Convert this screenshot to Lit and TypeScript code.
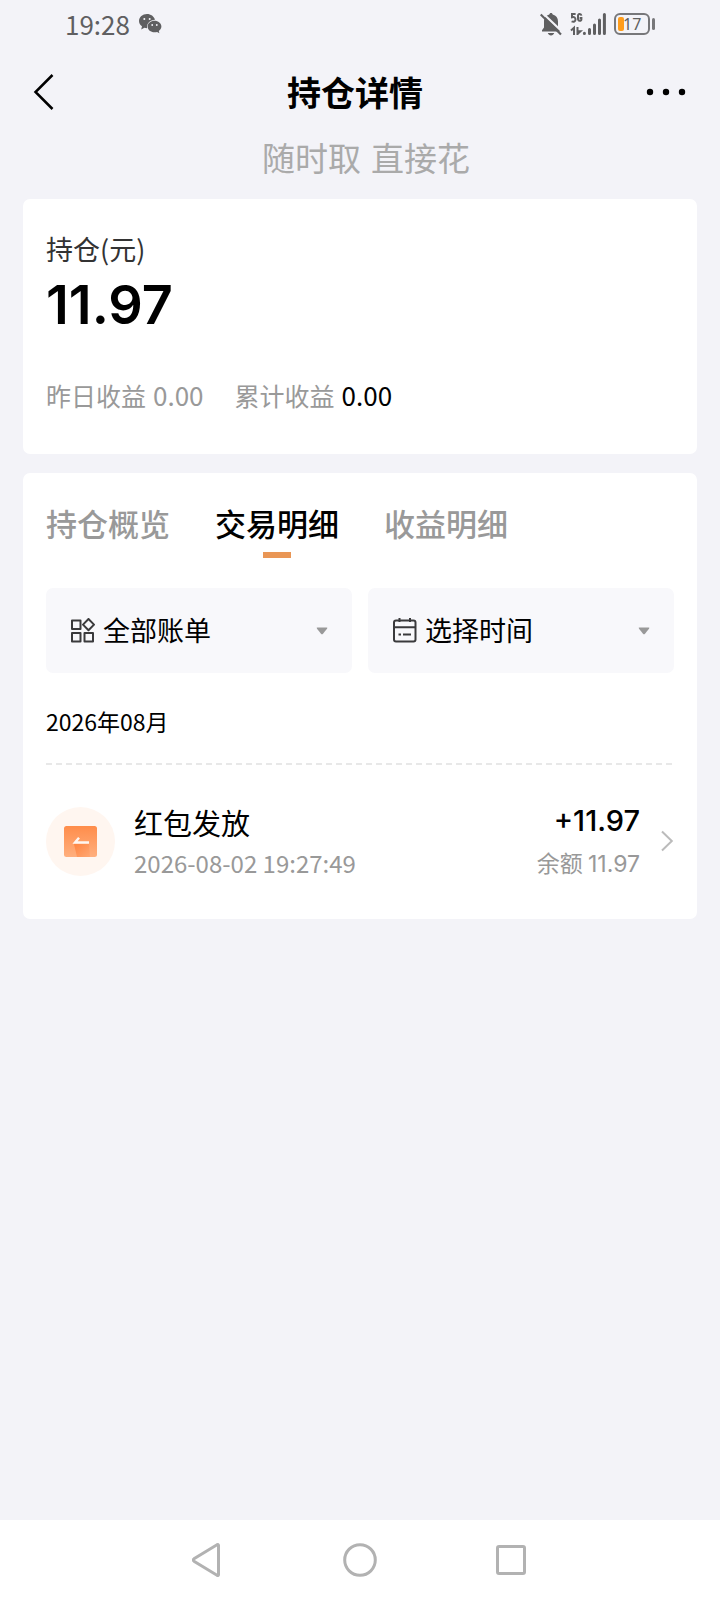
import { LitElement, html, css } from "lit";
import { customElement, state } from "lit/decorators.js";

const TABS = ["持仓概览", "交易明细", "收益明细"];

@customElement("app-root")
export class AppRoot extends LitElement {
  @state() private active = 1;

  static styles = css`
    :host {
      display: flex;
      flex-direction: column;
      min-height: 100vh;
      background: #f3f3f8;
      color: #000;
      font-family: "Noto Sans CJK SC", "Noto Sans", sans-serif;
    }
    * {
      box-sizing: border-box;
    }
    button,
    select {
      font: inherit;
      color: inherit;
      border: 0;
      padding: 0;
      margin: 0;
      background: none;
      text-align: left;
    }
    svg {
      display: block;
      flex: none;
    }
    h1,
    p {
      margin: 0;
      font-weight: 400;
    }
    .status {
      display: flex;
      align-items: center;
      height: 48px;
      padding: 0 64px 0 65px;
      color: #5f5f61;
      font-size: 26px;
      line-height: 48px;
    }
    .status .wechat {
      margin-left: 9px;
    }
    .status .right {
      display: flex;
      align-items: center;
      margin-left: auto;
      gap: 8px;
    }
    .header {
      display: grid;
      grid-template-columns: 1fr auto 1fr;
      align-items: center;
      height: 88px;
      padding: 0 32px;
    }
    .header h1 {
      margin-right: 10px;
      font-size: 34px;
      font-weight: 700;
      line-height: 48px;
    }
    .header .more {
      justify-self: end;
    }
    .slogan {
      display: flex;
      justify-content: center;
      gap: 10px;
      height: 63px;
      padding-left: 12px;
      font-size: 33px;
      line-height: 42px;
      color: #aaa;
    }
    .main {
      display: flex;
      flex-direction: column;
      gap: 19px;
      padding: 0 23px;
      flex: 1;
    }
    .card {
      background: #fff;
      border-radius: 7px;
      padding: 30px 23px 36px;
    }
    .label {
      font-size: 27px;
      line-height: 40px;
      color: #333;
    }
    .total {
      font-family: Inter, sans-serif;
      font-size: 54px;
      line-height: 72px;
      font-weight: 600;
    }
    .gains {
      display: flex;
      gap: 31px;
      margin-top: 34px;
      margin-bottom: 3px;
      font-size: 25px;
      line-height: 40px;
      color: #999;
    }
    .gain {
      display: flex;
      gap: 7px;
    }
    .gain .value {
      font-size: 26px;
    }
    .gain .dark {
      color: #000;
    }
    .tabs {
      display: flex;
      gap: 45px;
    }
    .tab {
      display: flex;
      flex-direction: column;
      align-items: center;
      gap: 9px;
      font-size: 31px;
      line-height: 40px;
      font-weight: 500;
      color: #999;
    }
    .tab::after {
      content: "";
      width: 28px;
      height: 6px;
    }
    .tab.on {
      color: #000;
    }
    .tab.on::after {
      background: #e99655;
    }
    .filters {
      display: grid;
      grid-template-columns: 1fr 1fr;
      gap: 16px;
      margin-top: 30px;
    }
    .filter {
      display: flex;
      align-items: center;
      gap: 8px;
      height: 85px;
      padding: 0 24px;
      border-radius: 7px;
      background: #f8f8fb;
    }
    .filter select {
      appearance: none;
      flex: 1;
      min-width: 0;
      padding-bottom: 2px;
      font-size: 27px;
      line-height: 40px;
    }
    .month {
      margin-top: 32px;
      font-size: 23px;
      line-height: 32px;
    }
    .dash {
      height: 2px;
      margin-top: 26px;
      background: repeating-linear-gradient(90deg, #e8e8e8 0 6px, transparent 6px 10px);
    }
    .row {
      display: flex;
      align-items: center;
      width: 100%;
      margin-top: 34px;
    }
    .row .who {
      flex: 1;
      margin-left: 19px;
    }
    .row .sum {
      text-align: right;
      margin-right: 21px;
    }
    .strong {
      display: block;
      font-size: 29px;
      line-height: 44px;
    }
    .sub {
      display: block;
      font-size: 24px;
      line-height: 38px;
      color: #999;
    }
    .sum .strong {
      font-family: Inter, sans-serif;
      font-weight: 500;
    }
    .sum .sub {
      font-size: 23px;
    }
    .sum .num {
      font-family: Inter, sans-serif;
    }
    .nav {
      display: flex;
      justify-content: center;
      align-items: center;
      gap: 117px;
      height: 80px;
      background: #fff;
    }
  `;

  render() {
    return html`
      <div class="status">
        <span>19:28</span>
        <svg class="wechat" width="24" height="20" viewBox="0 0 24 20">
          <path fill="#5f5f61" d="M8 0C3.600 0 0 3 0 6.900c0 2.200 1.100 4.100 3 5.400L2.200 15.500l3.200-1.700c.9.300 1.800.4 2.600.4C7.600 9.500 11 5.800 16 5.800 15 2.400 11.800 0 8 0Z" />
          <path fill="#5f5f61" d="M15.500 6.700c-3.800 0-6.900 2.500-6.900 5.800s3.100 5.800 6.900 5.800c.9 0 1.800-.1 2.600-.4l2.300 1.400-.6-2.300c1.500-1.100 2.600-2.700 2.600-4.500 0-3.300-3.100-5.800-6.900-5.800Z" />
          <g fill="#f3f3f8"><circle cx="5.300" cy="5" r="1" /><circle cx="10.700" cy="5" r="1" /><circle cx="13.200" cy="11" r=".9" /><circle cx="17.800" cy="11" r=".9" /></g>
        </svg>
        <div class="right">
          <svg width="22" height="23" viewBox="0 0 22 23">
            <path fill="#5f5f61" d="M11 0c1 0 1.500.6 1.700 1.500C16.200 2.300 18 5 18 8.500v6l2 2.700v1.300H2v-1.300l2-2.700v-6c0-3.500 2-6.200 5.300-7C9.500.6 10 0 11 0ZM7.800 20h6.400c-.5 1.500-1.700 2.400-3.200 2.400S8.300 21.500 7.800 20Z" />
            <path stroke="#f3f3f8" stroke-width="2.200" d="M2.500 0 22 18.500" />
            <path stroke="#5f5f61" stroke-width="2.200" d="M.7 1.500 21 21.500" />
          </svg>
          <svg width="36" height="24" viewBox="0 0 36 24">
            <g fill="none" stroke="#5f5f61" stroke-width="2">
              <path d="M5.600 2H2v3.300c2.300-.6 3.500.3 3.500 2.200 0 2-1.900 2.700-3.900 1.800M11.400 3.600C11 1.200 8 1.300 8 4v2.500c0 3 3.400 3 3.400.7V6H9.600M1 18.500l3-2.800v7.300M7.500 15v8M7.500 22l3-2.800H7.500" />
            </g>
            <g stroke="#5f5f61" stroke-width="3" stroke-linecap="round"><path d="M14.400 21.300v.2M19.500 17.500v4M24.500 13v8.500M29.500 8v13.500M34.400 2.500v19" /></g>
          </svg>
          <svg width="42" height="22" viewBox="0 0 42 22">
            <rect x="1" y="1" width="34" height="20" rx="5" fill="none" stroke="#77777a" stroke-width="2" />
            <rect x="4" y="4" width="6" height="14" rx="2" fill="#ff9d1c" />
            <rect x="38" y="5" width="3" height="12" rx="1.500" fill="#77777a" />
            <text x="9" y="17" font-size="16" fill="#5f5f61" font-family="Noto Sans">17</text>
          </svg>
        </div>
      </div>
      <header class="header">
        <button aria-label="返回">
          <svg width="24" height="38" viewBox="0 0 24 38"><path d="M20.500 2 3.500 19l17 17" fill="none" stroke="#000" stroke-width="2.500" /></svg>
        </button>
        <h1>持仓详情</h1>
        <button class="more" aria-label="更多">
          <svg width="42" height="8" viewBox="0 0 42 8"><circle cx="4" cy="4" r="3.200" /><circle cx="20" cy="4" r="3.200" /><circle cx="36" cy="4" r="3.200" /></svg>
        </button>
      </header>
      <p class="slogan"><span>随时取</span> <span>直接花</span></p>
      <main class="main">
        <section class="card">
          <p class="label">持仓(元)</p>
          <p class="total">11.97</p>
          <div class="gains">
            <span class="gain">昨日收益 <span class="value">0.00</span></span>
            <span class="gain">累计收益 <span class="value dark">0.00</span></span>
          </div>
        </section>
        <section class="card">
          <div class="tabs" role="tablist">
            ${TABS.map(
              (t, i) => html`<button role="tab" aria-selected=${i === this.active} class="tab ${i === this.active ? "on" : ""}" @click=${() => (this.active = i)}>${t}</button>`
            )}
          </div>
          <div class="filters">
            <label class="filter">
              <svg width="25" height="25" viewBox="0 0 25 25" fill="none" stroke="#3a3a3c" stroke-width="2" stroke-linejoin="round">
                <path d="M2 2.500h8.500V11H2zM2 15h8.500v8.500H2zM14.500 15H23v8.500h-8.500zM18.500 1l5.500 5.600-5.500 5.600L13 6.600z" />
              </svg>
              <select aria-label="账单类型"><option>全部账单</option></select>
              <svg width="12" height="8" viewBox="0 0 12 8"><path fill="#999" d="M1.500.5h9q1.500 0 .5 1.300L7 6.700q-1 1.200-2 0L1 1.800Q0 .5 1.500.5Z" /></svg>
            </label>
            <label class="filter">
              <svg width="25" height="25" viewBox="0 0 25 25" fill="none" stroke="#3a3a3c" stroke-width="2">
                <rect x="2" y="2.500" width="21.500" height="21" rx="2" /><path d="M2 9.300h21.500M7.500 0v4M18 0v4M6.500 16.500h2.500M11 16.500h8" />
              </svg>
              <select aria-label="时间"><option>选择时间</option></select>
              <svg width="12" height="8" viewBox="0 0 12 8"><path fill="#999" d="M1.500.5h9q1.500 0 .5 1.300L7 6.700q-1 1.200-2 0L1 1.800Q0 .5 1.500.5Z" /></svg>
            </label>
          </div>
          <p class="month">2026年08月</p>
          <div class="dash"></div>
          <button class="row">
            <svg width="69" height="69" viewBox="0 0 69 69">
              <defs>
                <linearGradient id="g" x1="0" y1="0" x2="0" y2="1"><stop offset="0" stop-color="#ff8d4b" /><stop offset="1" stop-color="#ffaf7e" /></linearGradient>
                <linearGradient id="s" x1="0" y1="0" x2="1" y2="1"><stop offset="0" stop-color="#ff8440" /><stop offset="1" stop-color="#ffa874" /></linearGradient>
              </defs>
              <circle cx="34.500" cy="34.500" r="34.500" fill="#fff6f0" />
              <rect x="18" y="19" width="33" height="31" rx="2.500" fill="url(#g)" />
              <path d="M28 37h15l1 13H31z" fill="url(#s)" />
              <path d="M43 35.500H29l4-4.700" fill="none" stroke="#fff6f0" stroke-width="2.400" />
            </svg>
            <span class="who"><span class="strong">红包发放</span><span class="sub">2026-08-02 19:27:49</span></span>
            <span class="sum"><span class="strong">+11.97</span><span class="sub">余额 <span class="num">11.97</span></span></span>
            <svg width="13" height="22" viewBox="0 0 13 22"><path d="m1 1.500 9.800 9.500L1 20.500" fill="none" stroke="#bbb" stroke-width="2" /></svg>
          </button>
        </section>
      </main>
      <nav class="nav">
        <button aria-label="返回"><svg width="34" height="36" viewBox="0 0 34 36"><path d="M26.500 3.500v29q0 1.500-1.500.8L2 19.200Q.5 18 2 16.800L25 2.700q1.500-.7 1.500.8Z" fill="none" stroke="#b2b2b2" stroke-width="3" /></svg></button>
        <button aria-label="主页"><svg width="34" height="34" viewBox="0 0 34 34"><circle cx="17" cy="17" r="15.300" fill="none" stroke="#b2b2b2" stroke-width="3" /></svg></button>
        <button aria-label="最近任务"><svg width="34" height="34" viewBox="0 0 34 34"><rect x="3.500" y="3.500" width="27" height="27" rx="1.500" fill="none" stroke="#b2b2b2" stroke-width="3" /></svg></button>
      </nav>
    `;
  }
}
